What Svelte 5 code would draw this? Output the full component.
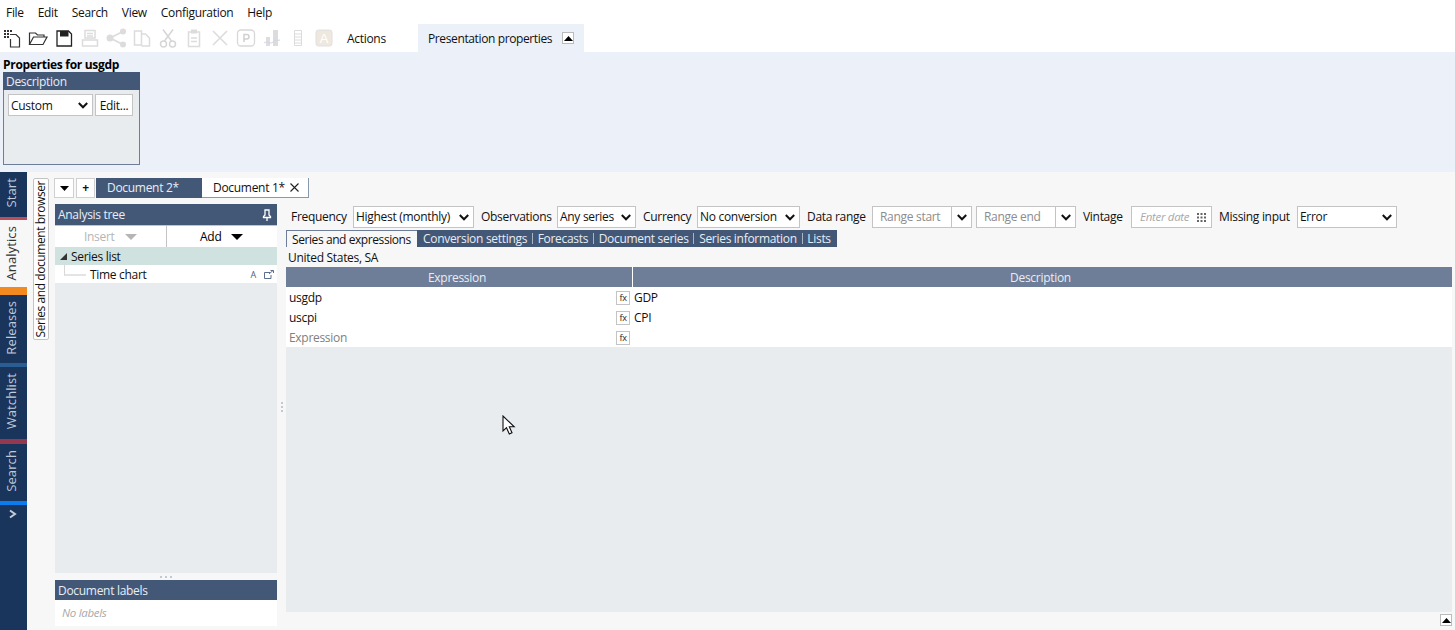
<script>
  const menus = ['File', 'Edit', 'Search', 'View', 'Configuration', 'Help'];
  const subTabs = ['Conversion settings', 'Forecasts', 'Document series', 'Series information', 'Lists'];
  const rows = [
    { expr: 'usgdp', desc: 'GDP' },
    { expr: 'uscpi', desc: 'CPI' },
    { expr: 'Expression', desc: '', hint: true }
  ];
  const rail = [
    { name: 'Start', h: 45, stripe: 'red' },
    { name: 'Analytics', h: 67, stripe: 'orange', active: true },
    { name: 'Releases', h: 68, stripe: 'blue' },
    { name: 'Watchlist', h: 72, stripe: 'rose' },
    { name: 'Search', h: 57, stripe: 'bright' }
  ];
</script>

{#snippet chev()}
  <svg class="chev" width="10" height="7" viewBox="0 0 10 7"><path d="M.8 1 5 5.300 9.200 1" fill="none" stroke="#111" stroke-width="2"/></svg>
{/snippet}

{#snippet upBtn()}
  <span class="upbtn"><svg width="9" height="5" viewBox="0 0 9 5"><path d="M4.500 0 9 5H0z" fill="#000"/></svg></span>
{/snippet}

{#snippet sel(text, cls)}
  <div class="sel {cls}"><span>{text}</span>{@render chev()}</div>
{/snippet}

{#snippet range(text)}
  <div class="range"><span class="ph">{text}</span><span class="rbtn">{@render chev()}</span></div>
{/snippet}

<div class="app">
  <nav class="menu">
    {#each menus as m}<span>{m}</span>{/each}
  </nav>

  <div class="toolbar">
    <div class="icons">
      <svg class="ic" viewBox="0 0 24 24"><g fill="#333"><rect x="4" y="4" width="2" height="2"/><rect x="7" y="4" width="2" height="2"/><rect x="10" y="4" width="2" height="2"/><rect x="4" y="7" width="2" height="2"/><rect x="7" y="7" width="2" height="2"/><rect x="4" y="10" width="2" height="2"/><rect x="7" y="10" width="2" height="2"/></g><path d="M10 8.500h6l3.500 3.500v9H10.500V13" fill="none" stroke="#333" stroke-width="1.200"/></svg>
      <svg class="ic" viewBox="0 0 24 24"><path d="M3.500 18.500V7h6l2 2h6.500v2M3.500 18.500 7.500 11H21l-4 7.500z" fill="none" stroke="#333" stroke-width="1.200"/></svg>
      <svg class="ic" viewBox="0 0 24 24"><path d="M5 5h11.500L19.500 8v12H5z" fill="none" stroke="#222" stroke-width="1.300"/><rect x="8" y="5" width="8.500" height="5.500" fill="#222"/></svg>
      <svg class="ic" viewBox="0 0 24 24"><path d="M7 4.500h10V12H7zM4.500 14h15v6h-15zM9 7.500h6M9 10h6" fill="none" stroke="#dcdcdc" stroke-width="1.500"/></svg>
      <svg class="ic" viewBox="0 0 24 24"><path d="M6 12 18 6M6 12l12 6" stroke="#dcdcdc" stroke-width="1.800" fill="none"/><circle cx="6" cy="12" r="3.500" fill="#dcdcdc"/><circle cx="19" cy="5.500" r="3" fill="#dcdcdc"/><circle cx="19" cy="18.500" r="3" fill="#dcdcdc"/></svg>
      <svg class="ic" viewBox="0 0 24 24"><path d="M4.500 5h7v14h-7zM11.500 8h4l4 4v8h-8" fill="none" stroke="#dcdcdc" stroke-width="1.500"/></svg>
      <svg class="ic" viewBox="0 0 24 24"><path d="M7 3.500 15.500 15M17 3.500 8.500 15" stroke="#d6d6d6" stroke-width="1.500" fill="none"/><circle cx="7.500" cy="18" r="3" fill="none" stroke="#d6d6d6" stroke-width="1.500"/><circle cx="16.500" cy="18" r="3" fill="none" stroke="#d6d6d6" stroke-width="1.500"/></svg>
      <svg class="ic" viewBox="0 0 24 24"><path d="M9 6H6.500v14.500h11V6H15" fill="none" stroke="#dcdcdc" stroke-width="1.500"/><rect x="9" y="3.500" width="6" height="4" fill="#dcdcdc"/><path d="M9 12h6M9 15.500h6" stroke="#dcdcdc" stroke-width="1.300"/></svg>
      <svg class="ic" viewBox="0 0 24 24"><path d="M5 5l14 14M19 5 5 19" stroke="#dcdcdc" stroke-width="1.600"/></svg>
      <svg class="ic" viewBox="0 0 24 24"><rect x="3.500" y="4" width="17" height="16" rx="3.500" fill="none" stroke="#d8d8d8" stroke-width="1.300"/><path d="M10 16V8.500h2.800a2.200 2.200 0 0 1 0 4.400H10" fill="none" stroke="#d0d0d0" stroke-width="1.500"/></svg>
      <svg class="ic" viewBox="0 0 24 24"><rect x="6" y="11" width="4" height="9" fill="#dedede"/><rect x="13" y="4" width="5" height="16" fill="#dcdcdc"/><path d="M4 17c4-3 6 2 9-1s4-1 7-2" stroke="#cfd6e4" fill="none"/></svg>
      <svg class="ic" viewBox="0 0 24 24"><path d="M8.500 4.500h7v15h-7zM8.500 8h7M8.500 11h7M8.500 14h7M8.500 17h7" fill="none" stroke="#dcdcdc"/></svg>
      <svg class="ic" viewBox="0 0 24 24"><rect x="4" y="4" width="16" height="16" rx="2.500" fill="#efe8de" stroke="#e0e0e0"/><text x="12" y="17" class="a-ic">A</text></svg>
    </div>
    <span class="actions">Actions</span>
    <div class="pres"><span class="pres-t">Presentation properties</span>{@render upBtn()}</div>
  </div>

  <section class="ribbon">
    <h1>Properties for usgdp</h1>
    <div class="group">
      <div class="ghead">Description</div>
      <div class="gbody">
        {@render sel('Custom', '')}
        <div class="editbtn">Edit...</div>
      </div>
    </div>
  </section>

  <div class="work">
    <aside class="rail">
      {#each rail as r}
        <div class="rail-item" class:active={r.active} style="height:{r.h}px"><span>{r.name}</span></div>
        <div class="stripe {r.stripe}"></div>
      {/each}
      <svg class="more" width="10" height="10" viewBox="0 0 10 10"><path d="M2 1.500 7 5 2 8.500" fill="none" stroke="#c3cbd8" stroke-width="2"/></svg>
    </aside>

    <div class="vtab-col"><div class="vtab"><span>Series and document browser</span></div></div>

    <div class="docs">
      <div class="doctabs">
        <span class="sq"><svg width="9" height="5" viewBox="0 0 9 5"><path d="M0 0h9L4.500 5z" fill="#000"/></svg></span>
        <span class="sq plus">+</span>
        <span class="dt dark">Document 2*</span>
        <span class="dt cur"><span class="dt-name">Document 1*</span><svg width="9" height="9" viewBox="0 0 9 9"><path d="M.5.5l8 8M8.500.5l-8 8" stroke="#222" stroke-width="1.100"/></svg></span>
      </div>

      <div class="panes">
        <div class="left">
          <div class="phead">
            <span>Analysis tree</span>
            <svg width="10" height="12" viewBox="0 0 10 12"><path d="M3 1h4v5l1.500 1.500v1h-7v-1L3 6zM5 9v3" fill="none" stroke="#fff" stroke-width="1.300"/></svg>
          </div>
          <div class="addrow">
            <div class="abtn off"><span>Insert</span><svg width="12" height="6" viewBox="0 0 12 6"><path d="M0 0h12L6 6z" fill="#b5b5b5"/></svg></div>
            <div class="abtn"><span>Add</span><svg width="12" height="6" viewBox="0 0 12 6"><path d="M0 0h12L6 6z" fill="#000"/></svg></div>
          </div>
          <div class="tree-root"><svg width="7" height="7" viewBox="0 0 7 7"><path d="M7 0v7H0z" fill="#333"/></svg><span>Series list</span></div>
          <div class="tree-leaf">
            <i class="elbow"></i><span class="leaf-name">Time chart</span>
            <span class="leaf-a">A</span>
            <svg width="10" height="9" viewBox="0 0 10 9"><path d="M6 2.500H.5v6H7V5M5 4l4-3.500M6.500.5H9.500V3" fill="none" stroke="#4a5f80" stroke-width=".9"/></svg>
          </div>
          <div class="tree-fill"></div>
          <div class="hsplit"><i></i><i></i><i></i></div>
          <div class="phead labels">Document labels</div>
          <div class="nolabels">No labels</div>
        </div>

        <div class="vsplit"><i></i><i></i><i></i></div>

        <div class="right">
          <div class="filters">
            <span>Frequency</span>
            {@render sel('Highest (monthly)', '')}
            <span>Observations</span>
            {@render sel('Any series', '')}
            <span>Currency</span>
            {@render sel('No conversion', '')}
            <span>Data range</span>
            <div class="ranges">
              {@render range('Range start')}
              {@render range('Range end')}
            </div>
            <span>Vintage</span>
            <div class="date">
              <span>Enter date</span>
              <svg width="9" height="9" viewBox="0 0 9 9" fill="#666"><rect width="2" height="2"/><rect x="3.500" width="2" height="2"/><rect x="7" width="2" height="2"/><rect y="3.500" width="2" height="2"/><rect x="3.500" y="3.500" width="2" height="2"/><rect x="7" y="3.500" width="2" height="2"/><rect y="7" width="2" height="2"/><rect x="3.500" y="7" width="2" height="2"/><rect x="7" y="7" width="2" height="2"/></svg>
            </div>
            <span>Missing input</span>
            {@render sel('Error', '')}
          </div>

          <div class="subtabs">
            <span class="st cur">Series and expressions</span>
            <div class="st-rest">
              {#each subTabs as t, i}
                {#if i > 0}<i class="sep"></i>{/if}<span>{t}</span>
              {/each}
            </div>
          </div>

          <div class="region">United States, SA</div>

          <div class="table">
            <div class="thead"><span class="c1">Expression</span><span class="c2">Description</span></div>
            {#each rows as r}
              <div class="trow">
                <div class="c1 cell" class:hint={r.hint}><span>{r.expr}</span><span class="fx">fx</span></div>
                <div class="c2 cell">{r.desc}</div>
              </div>
            {/each}
            <div class="tfill"></div>
          </div>

          <div class="foot">{@render upBtn()}</div>
        </div>
      </div>
    </div>
  </div>

  <svg class="cursor" width="14" height="20" viewBox="0 0 14 20"><path d="M1 1v15l3.500-3.300L7.300 19l2.700-1.200-2.700-6h4.900z" fill="#fff" stroke="#111" stroke-width="1.100"/></svg>
</div>

<style>
  :global(body) { margin: 0; background: #fff; }
  .app {
    position: relative;
    width: 1455px;
    height: 630px;
    overflow: hidden;
    display: flex;
    flex-direction: column;
    font: 12px/16px "Open Sans", "Liberation Sans", sans-serif;
    letter-spacing: -0.3px;
    color: #111;
    background: #fff;
  }
  .menu { height: 24px; box-sizing: border-box; padding: 1px 0 0 6px; display: flex; align-items: center; gap: 13.900px; }

  .toolbar { height: 28px; display: flex; align-items: center; }
  .icons { display: flex; gap: 2px; }
  .ic { width: 24px; height: 24px; display: block; }
  .a-ic { font: 13px "Liberation Sans", sans-serif; fill: #fff; text-anchor: middle; }
  .actions { margin-left: 11px; width: 71px; padding-top: 1px; }
  .pres { width: 166px; height: 28px; padding-left: 10px; box-sizing: border-box; background: #ecf0f8; display: flex; align-items: center; }
  .pres-t { width: 134px; padding-top: 2px; white-space: nowrap; letter-spacing: -0.38px; }
  .upbtn { width: 12px; height: 12px; box-sizing: border-box; border: 1px solid #bbb; background: #fff; display: flex; align-items: center; justify-content: center; }

  .ribbon { height: 120px; box-sizing: border-box; background: #ecf0f8; padding: 5px 3px 0; }
  h1 { margin: 0; font-size: 12px; line-height: 15px; font-weight: 700; color: #000; }
  .group { width: 137px; height: 93px; box-sizing: border-box; border: 1px solid #6e7d98; border-top: 0; background: #e8ecef; }
  .ghead { height: 18px; margin: 0 -1px; padding-left: 3px; background: #435877; color: #e8edf5; line-height: 20px; }
  .gbody { display: flex; gap: 2px; padding: 4px 4px 0; }
  .gbody .sel { width: 85px; }

  .sel, .range, .date, .editbtn { height: 22px; box-sizing: border-box; border: 1px solid #c4c4c4; background: #fff; display: flex; align-items: center; }
  .sel { justify-content: space-between; padding: 0 4px 0 2px; white-space: nowrap; }
  .gbody .sel, .editbtn { padding-top: 1px; }
  .chev { flex: none; }
  .editbtn { width: 38px; justify-content: center; }

  .work { flex: 1; min-height: 0; display: flex; background: #f7f7f7; }
  .rail { width: 27px; flex: none; background: #1a355c; display: flex; flex-direction: column; }
  .rail-item { box-sizing: border-box; padding: 0 6px 3px 0; display: flex; align-items: center; justify-content: center; color: #c0cad9; font-size: 13px; letter-spacing: 0.1px; }
  .rail-item span { writing-mode: vertical-rl; transform: rotate(180deg); }
  .rail-item.active { background: #f7f7f7; color: #333; padding-bottom: 0; }
  .stripe { height: 4px; }
  .red { height: 3px; background: #b84f5b; }
  .orange { height: 8px; background: #f28a1f; }
  .blue { background: #2a5e93; }
  .rose { height: 5px; background: #94384f; }
  .bright { background: #0a7cf0; }
  .more { margin: 4px 0 0 8px; }

  .vtab-col { width: 27px; flex: none; padding: 6px 0 0 6px; box-sizing: border-box; }
  .vtab { width: 16px; height: 162px; box-sizing: border-box; border: 1px solid #c4c4c4; border-radius: 2px; background: #fff; display: flex; align-items: center; justify-content: center; }
  .vtab span { writing-mode: vertical-rl; transform: rotate(180deg); white-space: nowrap; line-height: 14px; letter-spacing: -0.42px; }

  .docs { flex: 1; min-width: 0; display: flex; flex-direction: column; }
  .doctabs { height: 32px; padding-top: 6px; box-sizing: border-box; display: flex; align-items: flex-start; }
  .sq { width: 20px; height: 20px; box-sizing: border-box; border: 1px solid #d0d0d0; background: #fff; display: flex; align-items: center; justify-content: center; margin-right: 2px; }
  .sq.plus { font-weight: 700; width: 19px; margin-right: 1px; }
  .dt { height: 20px; display: flex; align-items: center; box-sizing: border-box; }
  .dark { width: 106px; background: #435877; color: #e8edf5; padding-left: 11px; }
  .dt.cur { width: 107px; background: #fff; border: 1px solid #8a98ad; border-left: 0; border-top: 0; padding-left: 11px; }
  .dt-name { width: 77px; white-space: nowrap; }

  .panes { flex: 1; min-height: 0; display: flex; }
  .left { width: 222px; flex: none; margin-left: 1px; display: flex; flex-direction: column; padding-bottom: 4px; box-sizing: border-box; }
  .phead { height: 21px; flex: none; box-sizing: border-box; padding: 1px 5px 0 3px; display: flex; align-items: center; justify-content: space-between; background: #435877; color: #e8edf5; }
  .addrow { display: flex; height: 22px; gap: 1px; flex: none; background: #c4c4c4; }
  .abtn { flex: 1; background: #fff; display: flex; align-items: center; justify-content: center; gap: 10px; color: #000; margin-top: 1px; }
  .abtn.off { color: #b5b5b5; }
  .tree-root { height: 18px; flex: none; box-sizing: border-box; background: #cfe2df; display: flex; align-items: center; padding: 1px 0 0 5px; gap: 4px; }
  .tree-leaf { position: relative; height: 18px; flex: none; box-sizing: border-box; background: #fff; display: flex; align-items: center; padding: 1px 3px 0 35px; }
  .elbow { position: absolute; left: 9px; top: 0; width: 21px; height: 9px; border-left: 1px solid #d8d8d8; border-bottom: 2px solid #e4e4e4; }
  .leaf-name { flex: 1; }
  .leaf-a { font-size: 9px; color: #4a5f80; margin-right: 8px; }
  .tree-fill { flex: 1; background: #e8ecef; }
  .hsplit { height: 7px; flex: none; display: flex; align-items: center; justify-content: center; gap: 3px; background: #f7f7f7; }
  .hsplit i, .vsplit i { width: 2px; height: 2px; background: #c4c9d0; display: block; }
  .labels { height: 20px; }
  .nolabels { height: 26px; flex: none; background: #fff; color: #a9a9a9; font-style: italic; padding: 5px 0 0 7px; box-sizing: border-box; font-size: 11.500px; }

  .vsplit { width: 9px; flex: none; display: flex; flex-direction: column; align-items: center; justify-content: center; gap: 2px; padding-bottom: 20px; box-sizing: border-box; }

  .right { flex: 1; min-width: 0; display: flex; flex-direction: column; padding-right: 3px; }
  .filters {
    height: 22px;
    margin-top: 2px;
    padding-left: 5px;
    flex: none;
    display: grid;
    grid-template-columns: 55px 121px 69px 79px 47px 103px 58px 204px 41px 81px 71px 100px;
    column-gap: 7px;
    align-items: center;
    white-space: nowrap;
  }
  .ranges { display: flex; gap: 4px; }
  .range { width: 100px; padding-left: 7px; justify-content: space-between; }
  .ph { color: #8c8c8c; }
  .rbtn { width: 19px; height: 20px; flex: none; border-left: 1px solid #c4c4c4; display: flex; align-items: center; justify-content: center; }
  .date { padding: 0 5px 0 8px; justify-content: space-between; color: #a9a9a9; font-style: italic; font-size: 11.500px; }

  .subtabs { height: 17px; margin-top: 2px; display: flex; flex: none; }
  .st { box-sizing: border-box; border-left: 1px solid #6e7d98; border-top: 1px solid #6e7d98; }
  .st.cur { width: 131px; padding-left: 5px; line-height: 17px; white-space: nowrap; letter-spacing: -0.42px; }
  .st-rest { background: #435877; color: #e8edf5; display: flex; align-items: center; padding: 0 5px 0 6px; gap: 4.750px; width: 420px; box-sizing: border-box; white-space: nowrap; }
  .sep { width: 1px; height: 11px; background: #a9b4c5; }

  .region { height: 20px; flex: none; line-height: 22px; padding-left: 2px; }

  .table { flex: 1; min-height: 0; display: flex; flex-direction: column; }
  .thead { height: 20px; flex: none; display: flex; background: #6e7d98; color: #e8edf5; text-align: center; line-height: 21px; }
  .c1 { width: 347px; flex: none; box-sizing: border-box; }
  .c2 { flex: 1; }
  .thead .c1 { border-right: 1px solid #fff; padding-right: 4px; }
  .thead .c2 { padding-right: 4px; }
  .trow { height: 20px; flex: none; display: flex; background: #fff; }
  .cell { display: flex; align-items: center; box-sizing: border-box; padding-top: 1px; }
  .c1.cell { justify-content: space-between; padding-left: 3px; padding-right: 3px; }
  .c2.cell { padding-left: 1px; }
  .hint { color: #808080; }
  .fx { width: 14px; height: 14px; box-sizing: border-box; border: 1px solid #c4c4c4; font-size: 9px; line-height: 12px; text-align: center; color: #222; }
  .tfill { flex: 1; background: #e8ecef; }
  .foot { height: 18px; flex: none; display: flex; justify-content: flex-end; align-items: flex-start; padding-top: 2px; box-sizing: border-box; }

  .cursor { position: absolute; left: 502px; top: 415px; }
</style>
